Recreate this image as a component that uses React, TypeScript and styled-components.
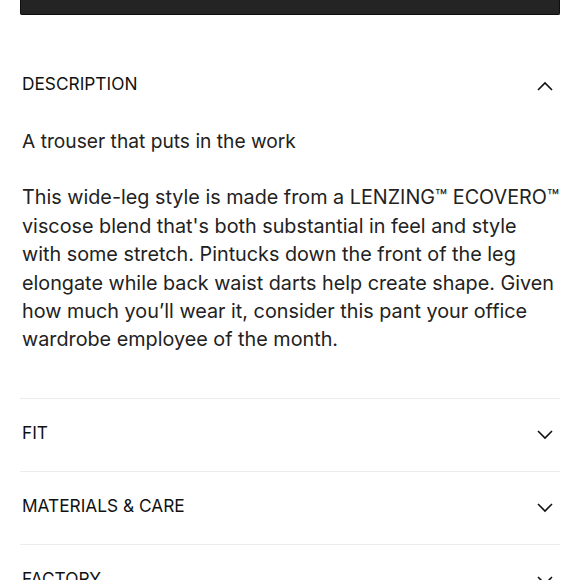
import React from "react";
import styled, { createGlobalStyle } from "styled-components";

const GlobalStyle = createGlobalStyle`
  html, body {
    margin: 0;
    padding: 0;
    background: #ffffff;
  }
  body {
    font-family: Inter, "Liberation Sans", Arial, sans-serif;
    color: #1b1b1b;
    -webkit-font-smoothing: antialiased;
  }
`;

const Page = styled.div`
  width: 580px;
  height: 580px;
  overflow: hidden;
  padding: 0 20px 0 20px;
  box-sizing: border-box;
`;

const AddButton = styled.div`
  height: 15px;
  background: #242424;
  border: 1.5px solid #0e0e0e;
  border-top: none;
  border-radius: 0 0 2px 2px;
  box-sizing: border-box;
`;

const Accordion = styled.div`
  margin-top: 35px;
`;

const Section = styled.section<{ $divider?: boolean }>`
  border-top: ${(p) => (p.$divider ? "1.5px solid #ececec" : "none")};
`;

const Header = styled.div`
  height: 72px;
  display: flex;
  align-items: center;
  justify-content: space-between;
  padding: 0 7px 0 2px;
`;

const Title = styled.h3`
  margin: 0 0 4px 0;
  font-size: 17.3px;
  font-weight: 400;
  line-height: 24px;
  letter-spacing: 0;
  color: #111;
`;

const Chevron = styled.svg`
  width: 16px;
  height: 10px;
  display: block;
`;

const Body = styled.div`
  padding: 5px 0 44px 2px;
  font-size: 19.8px;
  line-height: 28.4px;
  color: #222;
`;

const Tagline = styled.p`
  margin: 0 0 28px 0;
  font-size: 19.2px;
`;

const Paragraph = styled.p`
  margin: 0;
`;

const Line = styled.span`
  display: block;
  white-space: nowrap;
`;

const Arrow: React.FC<{ up?: boolean }> = ({ up }) => (
  <Chevron viewBox="0 0 16 10" fill="none">
    <path
      d={up ? "M1 9 L8 2 L15 9" : "M1 1 L8 8 L15 1"}
      stroke="#111"
      strokeWidth="1.6"
    />
  </Chevron>
);

const description = [
  "This wide-leg style is made from a LENZING™ ECOVERO™",
  "viscose blend that's both substantial in feel and style",
  "with some stretch. Pintucks down the front of the leg",
  "elongate while back waist darts help create shape. Given",
  "how much you’ll wear it, consider this pant your office",
  "wardrobe employee of the month.",
];

const sections = ["FIT", "MATERIALS & CARE", "FACTORY"];

export default function App() {
  return (
    <>
      <GlobalStyle />
      <Page>
        <AddButton />
        <Accordion>
          <Section>
            <Header>
              <Title>DESCRIPTION</Title>
              <Arrow up />
            </Header>
            <Body>
              <Tagline>A trouser that puts in the work</Tagline>
              <Paragraph>
                {description.map((l) => (
                  <Line key={l}>{l}</Line>
                ))}
              </Paragraph>
            </Body>
          </Section>
          {sections.map((s) => (
            <Section key={s} $divider>
              <Header>
                <Title>{s}</Title>
                <Arrow />
              </Header>
            </Section>
          ))}
        </Accordion>
      </Page>
    </>
  );
}
